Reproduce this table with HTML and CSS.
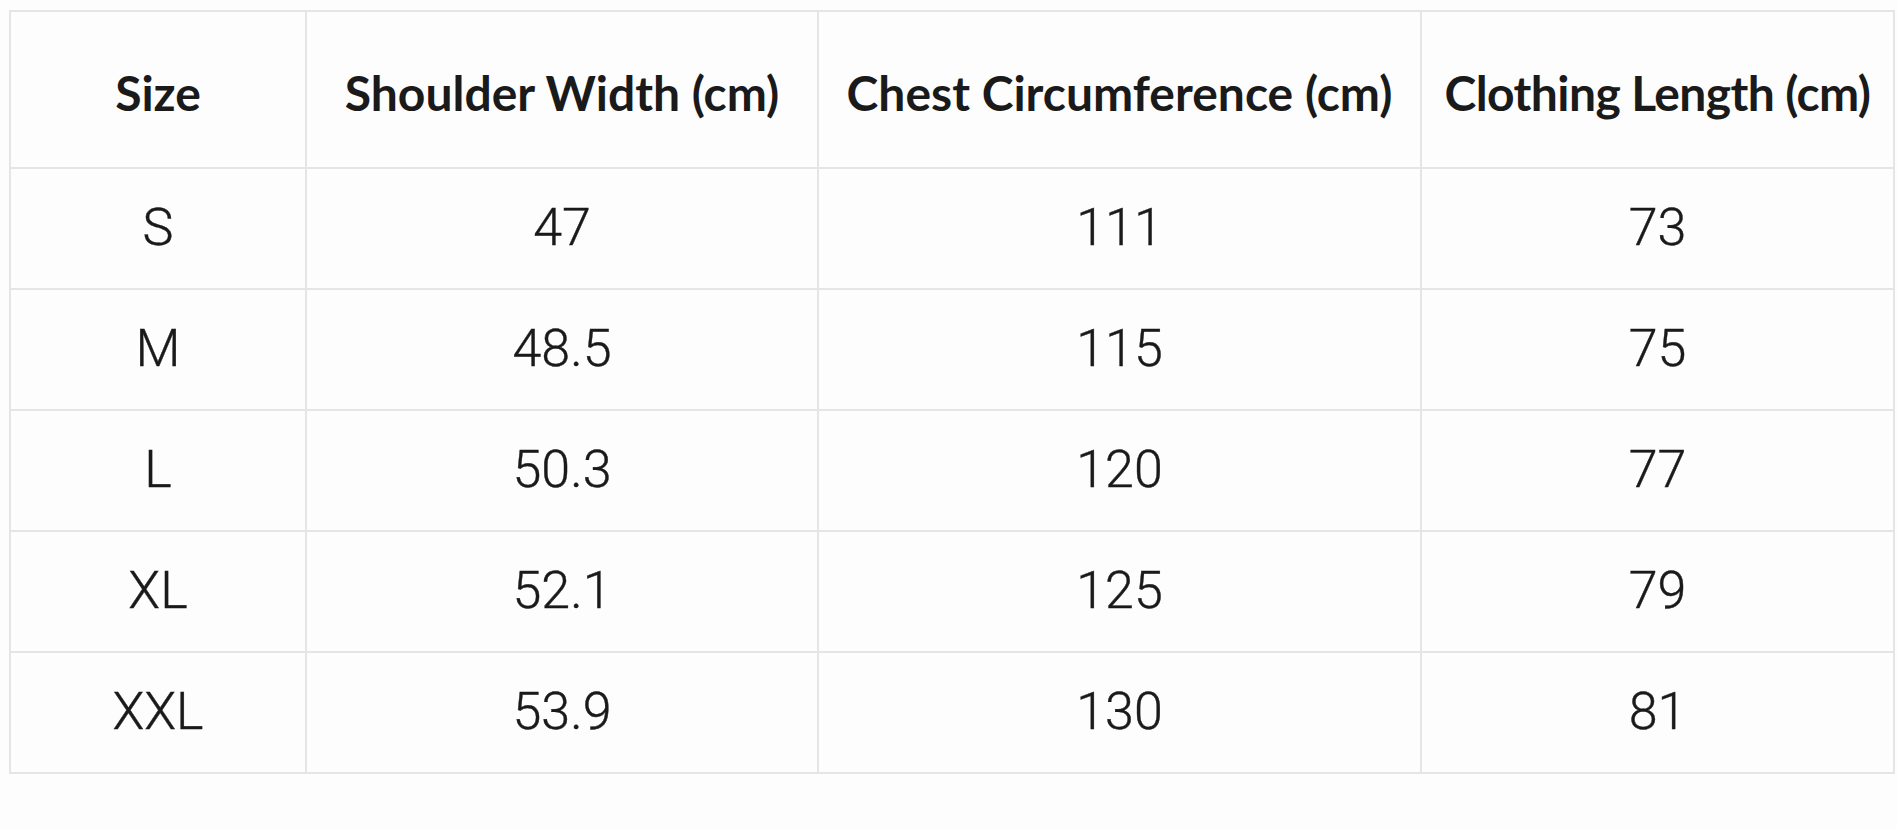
FILE: index.html
```html
<!DOCTYPE html>
<html lang="en">
<head>
<meta charset="utf-8">
<title>Size Chart</title>
<link rel="stylesheet" href="styles.css">
</head>
<body>
<div class="page">
  <table class="size-table">
    <colgroup>
      <col class="c1"><col class="c2"><col class="c3"><col class="c4">
    </colgroup>
    <thead>
      <tr>
        <th>Size</th>
        <th>Shoulder Width (cm)</th>
        <th>Chest Circumference (cm)</th>
        <th class="tight">Clothing Length (cm)</th>
      </tr>
    </thead>
    <tbody>
      <tr><td>S</td><td>47</td><td>111</td><td>73</td></tr>
      <tr><td>M</td><td>48.5</td><td>115</td><td>75</td></tr>
      <tr><td>L</td><td>50.3</td><td>120</td><td>77</td></tr>
      <tr><td>XL</td><td>52.1</td><td>125</td><td>79</td></tr>
      <tr><td>XXL</td><td>53.9</td><td>130</td><td>81</td></tr>
    </tbody>
  </table>
</div>
</body>
</html>
```

FILE: styles.css
```css
html, body {
  margin: 0;
  padding: 0;
  background: #fdfdfd;
}

.page {
  padding: 10px 0 0 9px;
}

.size-table {
  border-collapse: collapse;
  table-layout: fixed;
  width: 1884px;
  color: #1a1a1a;
}

.c1 { width: 296px; }
.c2 { width: 512px; }
.c3 { width: 603px; }
.c4 { width: 473px; }

.size-table th,
.size-table td {
  border: 2px solid #e5e5e5;
  text-align: center;
  vertical-align: middle;
  padding: 0;
}

.size-table th {
  height: 149px;
  font-family: "Lato", "Open Sans", sans-serif;
  font-weight: 700;
  font-size: 48px;
  padding-top: 6px;
}

.size-table th.tight {
  letter-spacing: -0.6px;
}

.size-table td {
  height: 116px;
  font-family: "Roboto", "Liberation Sans", sans-serif;
  font-weight: 300;
  font-size: 52px;
  padding-bottom: 3px;
  -webkit-text-stroke: 0.4px #1a1a1a;
}
```
